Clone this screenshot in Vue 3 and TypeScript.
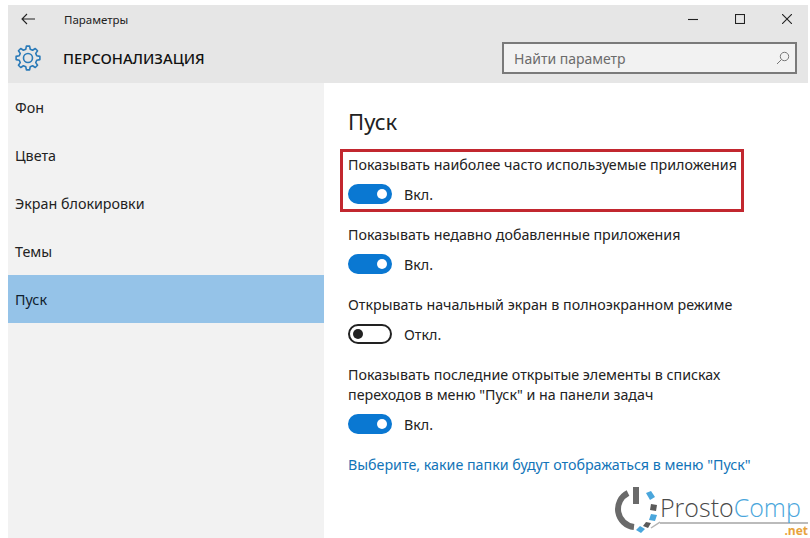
<script setup lang="ts">
interface Opt { lines: string[]; on: boolean; hl?: boolean }
const nav = ['Фон', 'Цвета', 'Экран блокировки', 'Темы', 'Пуск']
const opts: Opt[] = [
  { lines: ['Показывать наиболее часто используемые приложения'], on: true, hl: true },
  { lines: ['Показывать недавно добавленные приложения'], on: true },
  { lines: ['Открывать начальный экран в полноэкранном режиме'], on: false },
  { lines: ['Показывать последние открытые элементы в списках', 'переходов в меню "Пуск" и на панели задач'], on: true },
]
function gearPath(teeth: number, ro: number, ri: number, c: number): string {
  const pts: string[] = []
  const step = (Math.PI * 2) / teeth
  for (let i = 0; i < teeth; i++) {
    const a = i * step
    const list: [number, number][] = [
      [ri, a - step * 0.32],
      [ro, a - step * 0.17],
      [ro, a + step * 0.17],
      [ri, a + step * 0.32],
    ]
    for (const [r, t] of list) {
      pts.push(`${(c + r * Math.sin(t)).toFixed(2)} ${(c - r * Math.cos(t)).toFixed(2)}`)
    }
  }
  return 'M' + pts.join('L') + 'Z'
}
const gear = gearPath(8, 12, 9, 13)
</script>

<template>
  <div class="win">
    <header class="head">
      <div class="titlebar">
        <svg class="back" width="14" height="12" viewBox="0 0 14 12"><path d="M6 1 1 6l5 5M1 6h13" fill="none" stroke="#222" stroke-width="1.1"/></svg>
        <span class="apptitle">Параметры</span>
        <div class="winbtns">
          <svg width="10" height="10" viewBox="0 0 10 10"><path d="M0 5.500h10" stroke="#222" stroke-width="1.100"/></svg>
          <svg width="10" height="10" viewBox="0 0 10 10"><rect x=".5" y=".5" width="9" height="9" fill="none" stroke="#222" stroke-width="1.100"/></svg>
          <svg width="10" height="10" viewBox="0 0 10 10"><path d="M0 0l10 10M10 0 0 10" stroke="#222" stroke-width="1.100"/></svg>
        </div>
      </div>
      <div class="subbar">
        <svg class="gear" width="26" height="26" viewBox="0 0 26 26" fill="none" stroke="#2a7ab8" stroke-width="1.600" stroke-linejoin="round">
          <circle cx="13" cy="13" r="4.500"/>
          <path :d="gear"/>
        </svg>
        <h1 class="section">ПЕРСОНАЛИЗАЦИЯ</h1>
        <div class="search">
          <span>Найти параметр</span>
          <svg width="14" height="14" viewBox="0 0 14 14" fill="none" stroke="#777" stroke-width="1"><circle cx="8.500" cy="5.500" r="4.200"/><path d="M5.500 8.500 1 13"/></svg>
        </div>
      </div>
    </header>
    <div class="body">
      <nav class="side">
        <div v-for="n in nav" :key="n" class="item" :class="{ active: n === 'Пуск' }">{{ n }}</div>
      </nav>
      <main class="main">
        <h2 class="title">Пуск</h2>
        <section v-for="(o, i) in opts" :key="i" class="opt" :class="{ hl: o.hl }">
          <div class="label" v-for="l in o.lines" :key="l">{{ l }}</div>
          <div class="toggle">
            <span class="sw" :class="{ on: o.on }"><i></i></span>
            <span class="state">{{ o.on ? 'Вкл.' : 'Откл.' }}</span>
          </div>
        </section>
        <a class="link">Выберите, какие папки будут отображаться в меню "Пуск"</a>
      </main>
    </div>
    <div class="logo">
      <svg class="mark" width="50" height="56" viewBox="0 0 50 56">
        <path d="M18 11 A 18 18 0 0 0 24 45" fill="none" stroke="#6a6a6a" stroke-width="6"/>
        <rect x="23" y="5" width="6" height="17" fill="#6a6a6a"/>
        <path d="M36 11l5-2 4 6-5 3z" fill="#4aa6dc"/>
        <path d="M41 22l6 1-1 6-6-1z" fill="#5a5a5a"/>
        <path d="M41 32l6 1-2 6-6-1z" fill="#4aa6dc"/>
        <path d="M36 40l5 1-3 5-5-2z" fill="#5a5a5a"/>
        <path d="M30 44l5 3-4 4-5-3z" fill="#4aa6dc"/>
        <path d="M41 46l9-6" stroke="#b4b4b4" stroke-width="1.500" fill="none"/>
      </svg>
      <div class="wordmark">
        <div class="brand"><span class="p1">Prosto</span><span class="p2">Comp</span></div>
        <div class="net">.net</div>
      </div>
    </div>
  </div>
</template>

<style scoped>
.win {
  position: relative;
  margin: 5px 2px 0 8px;
  height: 533px;
  overflow: hidden;
  background: #fff;
  color: #1a1a1a;
  font-family: "Noto Sans", "Open Sans", sans-serif;
  display: flex;
  flex-direction: column;
}
.head { background: #e6e6e6; height: 78px; flex: none; }
.titlebar { display: flex; align-items: center; height: 28px; padding: 0 0 0 13px; }
.back { margin-right: 29px; }
.apptitle { font-size: 11.5px; color: #222; }
.winbtns { margin-left: auto; display: flex; gap: 37px; padding-right: 16px; }
.subbar { display: flex; align-items: center; height: 50px; padding: 0 11px 0 7px; }
.gear { margin-right: 22px; flex: none; }
.section { font-size: 14.8px; font-weight: 500; margin: 0; color: #111; }
.search {
  margin-left: auto;
  box-sizing: border-box;
  width: 295px;
  height: 32px;
  border: 2px solid #7a7a7a;
  background: #f2f2f2;
  display: flex;
  align-items: center;
  justify-content: space-between;
  padding: 0 5px 0 10px;
  font-size: 14px;
  color: #6b6b6b;
}
.body { flex: 1; display: flex; min-height: 0; }
.side { width: 316px; background: #f2f2f2; flex: none; }
.item { box-sizing: border-box; height: 48px; line-height: 48px; padding: 1px 0 0 7px; font-size: 14.3px; color: #222; }
.item.active { background: #95c3e8; color: #10202e; }
.main { flex: 1; padding: 22px 0 0 24px; font-size: 14.25px; }
.title { font-size: 22px; font-weight: 400; margin: 0 0 17px; line-height: 32px; color: #222; }
.opt { margin-bottom: 16px; }
.opt.hl {
  margin: -5px 0 13px -8px;
  width: 404px;
  box-sizing: border-box;
  border: 3px solid #c2272f;
  padding: 3px 0 0 5px;
  height: 63px;
}
.label { line-height: 20px; color: #222; white-space: nowrap; }
.toggle { display: flex; align-items: center; height: 30px; margin-top: 4px; }
.sw {
  box-sizing: border-box;
  width: 44px;
  height: 20px;
  border-radius: 10px;
  border: 2px solid #222;
  display: flex;
  align-items: center;
  padding: 0 3px;
  margin-right: 12px;
}
.sw i { width: 10px; height: 10px; border-radius: 50%; background: #222; }
.sw.on { background: #0a78d2; border-color: #0a78d2; justify-content: flex-end; }
.sw.on i { background: #fff; }
.state { color: #222; }
.link { display: block; color: #1274b8; line-height: 20px; white-space: nowrap; }
.logo { position: absolute; left: 602px; top: 477px; display: flex; }
.mark { flex: none; }
.wordmark { margin-top: 11px; width: 150px; font-family: "Open Sans", sans-serif; }
.brand { font-size: 25px; font-weight: 300; line-height: 29px; border-bottom: 2px solid #bbb; white-space: nowrap; }
.p1 { color: #4a4a4a; }
.p2 { color: #4aa6dc; }
.net { font-size: 12px; line-height: 13px; font-weight: 700; color: #e8a33c; text-align: right; padding-right: 2px; }
</style>
